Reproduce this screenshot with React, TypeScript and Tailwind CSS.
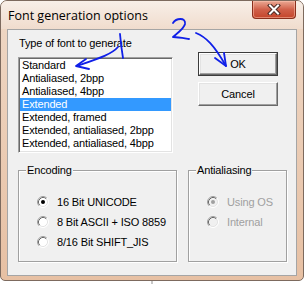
import React from "react";

const items = [
  "Standard",
  "Antialiased, 2bpp",
  "Antialiased, 4bpp",
  "Extended",
  "Extended, framed",
  "Extended, antialiased, 2bpp",
  "Extended, antialiased, 4bpp",
];

const Radio = ({ checked, disabled }: { checked?: boolean; disabled?: boolean }) => (
  <svg width="12" height="12" viewBox="0 0 12 12" className="shrink-0">
    <circle cx="6" cy="6" r="5" fill={disabled ? "#f0f0f0" : "#ffffff"} />
    <path d="M2.11,9.89 A5.5,5.5 0 0 1 9.89,2.11" fill="none" stroke="#a0a0a0" />
    <path d="M9.89,2.11 A5.5,5.5 0 0 1 2.11,9.89" fill="none" stroke="#ffffff" />
    <path d="M2.82,9.18 A4.5,4.5 0 0 1 9.18,2.82" fill="none" stroke="#696969" />
    <path d="M9.18,2.82 A4.5,4.5 0 0 1 2.82,9.18" fill="none" stroke="#e3e3e3" />
    {checked && <circle cx="6" cy="6" r="2" fill={disabled ? "#a0a0a0" : "#000000"} />}
  </svg>
);

const Group = ({ title, width, children }: { title: string; width: string; children: React.ReactNode }) => (
  <div
    className={`relative h-[92px] ${width} border border-[#a0a0a0] shadow-[1px_1px_0_#ffffff,inset_1px_1px_0_#ffffff]`}
  >
    <span className="absolute -top-[7px] left-[7px] bg-[#f0f0f0] px-[1px] leading-[13px]">{title}</span>
    {children}
  </div>
);

const App = () => {
  return (
    <div className="w-[304px] h-[284px] bg-white flex flex-col">
      <div className="relative w-[304px] h-[281px] flex flex-col border border-[#7d6a5e] rounded-t-[7px] rounded-b-[5px] bg-gradient-to-b from-[#efd8c6] to-[#e7c0a3] overflow-hidden">
        {/* Title bar */}
        <div className="h-[28px] flex justify-between bg-gradient-to-b from-[#f8efe8] to-[#f0dccd]">
          <span
            className="pl-[7px] pt-[7px] text-[12.5px] leading-[16px] text-black"
            style={{ fontFamily: "'Open Sans', 'Noto Sans', sans-serif" }}
          >
            Font generation options
          </span>
          <div className="mr-[7px] w-[44px] h-[18px] flex items-center justify-center rounded-b-[4px] border border-t-0 border-[#8a2f1c] bg-gradient-to-b from-[#eaa894] via-[#d0604a] to-[#c4452a] shadow-[inset_0_0_0_1px_rgba(255,200,180,0.5)]">
            <svg width="14" height="11" viewBox="0 0 14 11">
              <path d="M3,1.5 L11,9.5 M11,1.5 L3,9.5" stroke="#4a2a24" strokeWidth="4" strokeLinecap="square" />
              <path d="M3,1.5 L11,9.5 M11,1.5 L3,9.5" stroke="#ffffff" strokeWidth="2" strokeLinecap="square" />
            </svg>
          </div>
        </div>

        {/* Client area */}
        <div className="flex-1 px-[6px] pb-[4px] flex">
          <div
            className="flex-1 border border-[#a5a5a5] bg-[#f0f0f0] pl-[10px] pt-[7px] text-[11px] leading-[13px] tracking-[-0.15px] text-black"
            style={{ fontFamily: "'Liberation Sans', Arial, sans-serif" }}
          >
            <div className="flex items-start">
              <div className="flex flex-col">
                <span className="ml-[1px]">Type of font to generate</span>
                <div className="mt-[7px] w-[155px] h-[96px] p-[1px] bg-white border border-t-[#a0a0a0] border-l-[#a0a0a0] border-b-white border-r-white shadow-[inset_1px_1px_0_#696969,inset_-1px_-1px_0_#e3e3e3]">
                  {items.map((it) => (
                    <div
                      key={it}
                      className={`h-[13px] pl-[2px] whitespace-nowrap ${it === "Extended" ? "bg-[#3399ff] text-white" : ""}`}
                    >
                      {it}
                    </div>
                  ))}
                </div>
              </div>

              <div className="ml-[25px] mt-[15px] flex flex-col gap-[6px]">
                <div className="w-[80px] h-[24px] border border-[#3c3c3c]">
                  <div className="h-full flex items-center justify-center border border-t-white border-l-white border-b-[#696969] border-r-[#696969] shadow-[inset_-1px_-1px_0_#a0a0a0,inset_1px_1px_0_#e3e3e3]">
                    OK
                  </div>
                </div>
                <div className="w-[80px] h-[24px] flex items-center justify-center border border-t-white border-l-white border-b-[#696969] border-r-[#696969] shadow-[inset_-1px_-1px_0_#a0a0a0,inset_1px_1px_0_#e3e3e3]">
                  Cancel
                </div>
              </div>
            </div>

            <div className="mt-[17px] flex gap-[11px]">
              <Group title="Encoding" width="w-[159px]">
                <div className="pt-[21px] pl-[18px] flex flex-col">
                  <div className="h-[20px] flex items-center gap-[8px]">
                    <Radio checked />
                    <span>16 Bit UNICODE</span>
                  </div>
                  <div className="h-[20px] flex items-center gap-[8px]">
                    <Radio />
                    <span>8 Bit ASCII + ISO 8859</span>
                  </div>
                  <div className="h-[20px] flex items-center gap-[8px]">
                    <Radio />
                    <span>8/16 Bit SHIFT_JIS</span>
                  </div>
                </div>
              </Group>
              <Group title="Antialiasing" width="w-[99px]">
                <div className="pt-[21px] pl-[18px] flex flex-col text-[#a0a0a0]">
                  <div className="h-[20px] flex items-center gap-[8px]">
                    <Radio checked disabled />
                    <span>Using OS</span>
                  </div>
                  <div className="h-[20px] flex items-center gap-[8px]">
                    <Radio disabled />
                    <span>Internal</span>
                  </div>
                </div>
              </Group>
            </div>
          </div>
        </div>

        {/* Hand-drawn annotations */}
        <svg
          className="absolute -left-[1px] -top-[1px] pointer-events-none"
          width="304"
          height="284"
          viewBox="0 0 304 284"
          fill="none"
          stroke="#1020e8"
          strokeWidth="1.8"
          strokeLinecap="round"
          strokeLinejoin="round"
        >
          <path d="M120,34 Q121,46 123,58" />
          <path d="M118,47 C112,54 100,58 77,66" />
          <path d="M86,59 L76,66 L89,69" />
          <path d="M173,23 C176,18 186,17 185,24 C184,29 176,34 173,37 C178,37 183,38 189,39" />
          <path d="M196,33 C206,37 214,45 226,66" />
          <path d="M215,58 L226,66 L224,53" />
        </svg>
      </div>
      <div className="ml-[151px] w-[2px] h-[3px] bg-[#c8c8c8]" />
    </div>
  );
};

export default App;
